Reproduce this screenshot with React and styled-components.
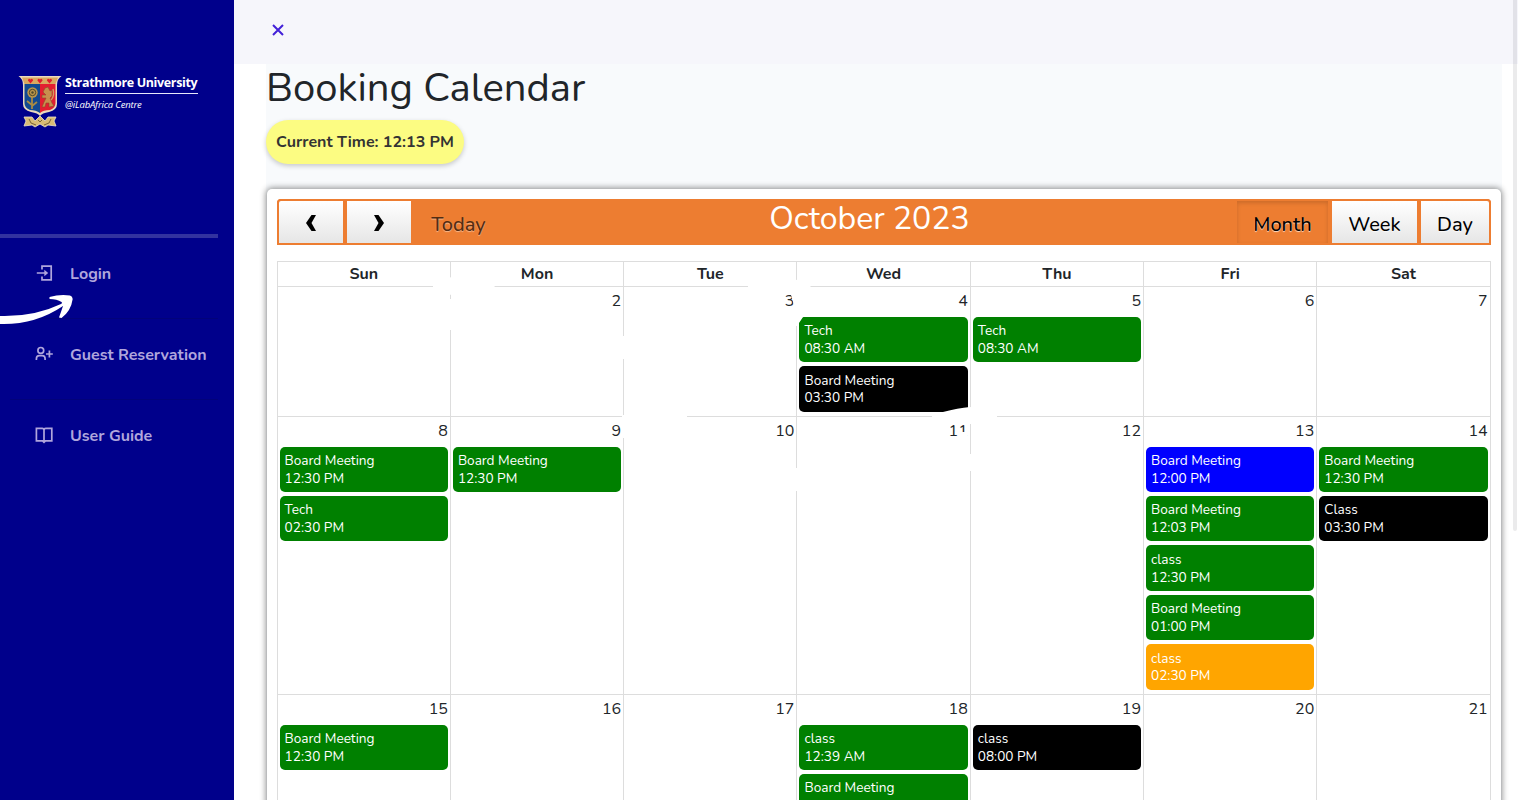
import React from "react";
import styled, { createGlobalStyle } from "styled-components";

const Global = createGlobalStyle`
  *, *::before, *::after { box-sizing: border-box; }
  html, body { margin: 0; height: 100%; overflow: hidden; background: #fff; }
  body { font-family: Nunito, Lato, "Open Sans", sans-serif; font-size: 16px; line-height: 1.6; color: #212529; }
`;

const Page = styled.div`
  position: relative;
  display: flex;
  width: 1518px;
  height: 800px;
  overflow: hidden;
`;

const Sidebar = styled.aside`
  flex: none;
  width: 234px;
  height: 800px;
  padding-right: 16px;
  background: #00008b;
`;

const Brand = styled.div`
  display: flex;
  gap: 3.5px;
  height: 234px;
  padding: 75px 0 0 17.5px;
  svg { flex: none; }
`;

const BrandText = styled.div`
  width: 133px;
  color: #fff;
  white-space: nowrap;
  font-family: "Open Sans", sans-serif;
`;

const BrandName = styled.div`
  height: 19px;
  border-bottom: 1px solid #e8e8fa;
  font-size: 12.5px;
  font-weight: 700;
  line-height: 15px;
  letter-spacing: -0.35px;
`;

const BrandSub = styled.div`
  padding-top: 2px;
  font-size: 9.5px;
  font-style: italic;
  line-height: 17px;
  letter-spacing: -0.18px;
`;

const Rule = styled.div`
  height: 4px;
  background: #32329f;
`;

const NavItem = styled.a`
  display: flex;
  align-items: center;
  gap: 17px;
  height: 81px;
  margin-left: 10px;
  padding: 0 0 8px 25px;
  border-bottom: 1px solid ${(p) => (p.$last ? "transparent" : "#02027a")};
  color: #b0a6dc;
  font-weight: 700;
  white-space: nowrap;
  svg { flex: none; margin-top: -2px; }
`;

const NavLabel = styled.span`
  padding-top: 1px;
`;

const Main = styled.main`
  flex: 1;
  min-width: 0;
`;

const TopBar = styled.header`
  display: flex;
  align-items: center;
  height: 64px;
  padding: 0 0 5px 38px;
  background: #f6f6fb;
`;

const Content = styled.section`
  height: 736px;
  margin: 0 16px 0 32px;
  background: #f8fafc;
`;

const Title = styled.h1`
  margin: 0 0 8px;
  font-size: 40px;
  font-weight: 400;
  line-height: 48px;
`;

const Clock = styled.div`
  display: flex;
  align-items: center;
  justify-content: center;
  width: 198px;
  height: 44px;
  margin-bottom: 25px;
  padding-top: 1px;
  border-radius: 22px;
  background: #fcfc82;
  box-shadow: 0 2px 5px rgba(0, 0, 0, 0.2);
  color: #333;
  font-weight: 700;
  white-space: nowrap;
`;

const Card = styled.div`
  height: 700px;
  margin: 0 1px;
  padding: 10px;
  border-radius: 5px;
  background: #fff;
  box-shadow: 0 0 6px 1px rgba(0, 0, 0, 0.45);
`;

const Toolbar = styled.div`
  display: flex;
  justify-content: space-between;
  height: 46px;
  margin-bottom: 16px;
  border-radius: 4px;
  background: #ed7d31;
`;

const Group = styled.div`
  display: flex;
`;

const ToolButton = styled.button`
  display: flex;
  align-items: center;
  justify-content: center;
  width: ${(p) => p.$w}px;
  height: 46px;
  padding: 5px 0 0;
  border: 2px solid #ed7d31;
  border-radius: ${(p) => p.$radius || "0"};
  background: ${(p) => (p.$flat ? "#ed7d31" : "linear-gradient(#fff, #e6e6e6)")};
  box-shadow: ${(p) => (p.$pressed ? "inset 0 2px 4px rgba(0,0,0,.15)" : "none")};
  color: ${(p) => (p.$dim ? "#532c11" : "#000")};
  font: inherit;
  font-size: 20px;
  font-weight: 500;
  text-shadow: 0 1px 1px rgba(255, 255, 255, ${(p) => (p.$dim ? 0.45 : 0.75)});
  svg { margin-top: -3px; }
`;

const Month = styled.h2`
  margin: 0;
  color: #fff;
  font-size: 32px;
  font-weight: 400;
  line-height: 40px;
`;

const Calendar = styled.div`
  margin: 0 0.4px 0 -0.4px;
  border: 1px solid #ddd;
  border-width: 1px 0 0 1px;
`;

const Week = styled.div`
  display: grid;
  grid-template-columns: repeat(7, 1fr);
  height: ${(p) => p.$h}px;
`;

const Weekday = styled.div`
  border: 1px solid #ddd;
  border-width: 0 1px 1px 0;
  font-weight: 700;
  line-height: 24.2px;
  text-align: center;
`;

const Day = styled.div`
  display: flex;
  flex-direction: column;
  gap: 4px;
  padding: 2px 2px 0;
  border: 1px solid #ddd;
  border-width: 0 1px 1px 0;
`;

const DayNumber = styled.div`
  height: 24px;
  line-height: 24px;
  text-align: right;
`;

const Event = styled.div`
  height: 45.36px;
  flex: none;
  padding: 5.38px 5px 0;
  border-radius: 5px;
  background: ${(p) => p.$color};
  color: #fff;
  font-size: 13.6px;
  line-height: 17.68px;
`;

const Overlay = styled.svg`
  position: absolute;
  inset: 0;
  pointer-events: none;
`;

const ScrollThumb = styled.div`
  position: absolute;
  top: 0;
  right: 1px;
  width: 4px;
  height: 531px;
  border-radius: 0 0 2px 2px;
  background: rgba(33, 37, 41, 0.09);
`;

function Crest() {
  return (
    <svg width="44" height="54" viewBox="0 0 44 54">
      <path d="M0.5 1H43.5Q39 4 39 10V29Q39 35 31 37Q24 38 22 41Q20 38 13 37Q5 35 5 29V10Q5 4 0.5 1Z" fill="#ead9bd" />
      <path d="M4 2.5H40L37.5 9H6.5Z" fill="#d9a860" />
      <path d="M6.5 9H22V38Q18 35 12 35Q6.5 33 6.5 28Z" fill="#124a91" />
      <path d="M22 9H37.5V28Q37.5 33 32 35Q25 35 22 38Z" fill="#e31e30" />
      {[12.5, 22, 31.5].map((x) => (
        <path key={x} d={`M${x} 8.6L${x - 2.6} 5.6Q${x - 2} 2.6 ${x} 4.6Q${x + 2} 2.6 ${x + 2.6} 5.6Z`} fill="#df1d2c" />
      ))}
      <path d="M14 22V34M14 30L9 26M14 31L19 27" stroke="#a78a44" strokeWidth="1.8" fill="none" />
      <circle cx="14.5" cy="17.5" r="5.2" fill="#bb964b" />
      <circle cx="14.5" cy="17.5" r="3.2" fill="none" stroke="#4d482b" strokeWidth="1" />
      <circle cx="14.5" cy="17.5" r="1.2" fill="#4d482b" />
      <path d="M27 13L30 12L32 16L34 15L34 21L32 23L34 28L36 31L31 32L31 28L28 28L27 32L24 32L26 27L28 23L24 23L24 20L28 20L25 17Z" fill="#c88f4d" stroke="#8c4a2a" strokeWidth="0.6" />
      <path d="M33 25Q37 21 35 14" stroke="#d1a061" strokeWidth="1.4" fill="none" />
      <path d="M6 42L14 42L17 46L22 41L27 46L30 42L38 42L36 46L38 51L30 50L27 52L22 49L17 52L14 50L6 51L8 46Z" fill="#d8bc75" stroke="#efe3c8" strokeWidth="0.8" />
      <path d="M11 44L13 48L18 50M33 44L31 48L26 50M20 45L22 47L24 45" stroke="#786338" strokeWidth="1" fill="none" />
    </svg>
  );
}

const line = { fill: "none", stroke: "currentColor", strokeWidth: 1.7 };

const LoginIcon = () => (
  <svg width="18" height="18" viewBox="0 0 18 18" {...line}>
    <path d="M7 5.5V2.2H16.2V15.8H7V12.5M1.8 9H11" />
    <path d="M9.3 5.8L13.2 9L9.3 12.2Z" fill="currentColor" stroke="none" />
  </svg>
);

const GuestIcon = () => (
  <svg width="18" height="18" viewBox="0 0 18 18" {...line}>
    <circle cx="5.8" cy="5.4" r="2.9" />
    <path d="M1.4 15V13.8Q1.4 10.7 4.3 10.7H7.2Q10.1 10.7 10.1 13.8V15M11 9H17.8M14.4 5.6V12.4" />
  </svg>
);

const GuideIcon = () => (
  <svg width="18" height="18" viewBox="0 0 18 18" {...line}>
    <path d="M1.4 2.3H7.2Q9 2.3 9 4Q9 2.3 10.8 2.3H16.8V14.8H10.4L9 16.2L7.6 14.8H1.4ZM9 4V16" />
  </svg>
);

const Chevron = ({ next }) => (
  <svg width="12" height="18" viewBox="0 0 12 18">
    <path d={next ? "M1 1H5.5L11 9L5.5 17H1L5.5 9Z" : "M11 1H6.5L1 9L6.5 17H11L6.5 9Z"} />
  </svg>
);

const G = "green";
const K = "black";
const weeks = [
  {
    height: 129.79,
    days: [
      [""], ["2"], ["3"],
      ["4", ["Tech", "08:30 AM", G], ["Board Meeting", "03:30 PM", K]],
      ["5", ["Tech", "08:30 AM", G]],
      ["6"], ["7"],
    ],
  },
  {
    height: 278,
    days: [
      ["8", ["Board Meeting", "12:30 PM", G], ["Tech", "02:30 PM", G]],
      ["9", ["Board Meeting", "12:30 PM", G]],
      ["10"], ["11"], ["12"],
      ["13", ["Board Meeting", "12:00 PM", "blue"], ["Board Meeting", "12:03 PM", G], ["class", "12:30 PM", G], ["Board Meeting", "01:00 PM", G], ["class", "02:30 PM", "orange"]],
      ["14", ["Board Meeting", "12:30 PM", G], ["Class", "03:30 PM", K]],
    ],
  },
  {
    height: 180,
    days: [
      ["15", ["Board Meeting", "12:30 PM", G]],
      ["16"], ["17"],
      ["18", ["class", "12:39 AM", G], ["Board Meeting", "", G]],
      ["19", ["class", "08:00 PM", K]],
      ["20"], ["21"],
    ],
  },
];

export default function App() {
  return (
    <Page>
      <Global />
      <Sidebar>
        <Brand>
          <Crest />
          <BrandText>
            <BrandName>Strathmore University</BrandName>
            <BrandSub>@iLabAfrica Centre</BrandSub>
          </BrandText>
        </Brand>
        <Rule />
        <NavItem><LoginIcon /><NavLabel>Login</NavLabel></NavItem>
        <NavItem><GuestIcon /><NavLabel>Guest Reservation</NavLabel></NavItem>
        <NavItem $last><GuideIcon /><NavLabel>User Guide</NavLabel></NavItem>
      </Sidebar>
      <Main>
        <TopBar>
          <svg width="12" height="12" viewBox="0 0 12 12">
            <path d="M1 1L11 11M11 1L1 11" stroke="#4321d8" strokeWidth="2" />
          </svg>
        </TopBar>
        <Content>
          <Title>Booking Calendar</Title>
          <Clock>Current Time: 12:13 PM</Clock>
          <Card>
            <Toolbar>
              <Group>
                <ToolButton $w={68} $radius="4px 0 0 0"><Chevron /></ToolButton>
                <ToolButton $w={68}><Chevron next /></ToolButton>
                <ToolButton $w={91} $flat $dim>Today</ToolButton>
              </Group>
              <Month>October 2023</Month>
              <Group>
                <ToolButton $w={95} $flat $pressed>Month</ToolButton>
                <ToolButton $w={89}>Week</ToolButton>
                <ToolButton $w={72} $radius="0 4px 0 0">Day</ToolButton>
              </Group>
            </Toolbar>
            <Calendar>
              <Week $h={24.95}>
                {["Sun", "Mon", "Tue", "Wed", "Thu", "Fri", "Sat"].map((d) => (
                  <Weekday key={d}>{d}</Weekday>
                ))}
              </Week>
              {weeks.map((w) => (
                <Week key={w.height} $h={w.height}>
                  {w.days.map(([n, ...events], i) => (
                    <Day key={i}>
                      <DayNumber>{n}</DayNumber>
                      {events.map(([name, time, color]) => (
                        <Event key={time} $color={color}>
                          <div>{name}</div>
                          <div>{time}</div>
                        </Event>
                      ))}
                    </Day>
                  ))}
                </Week>
              ))}
            </Calendar>
          </Card>
        </Content>
      </Main>
      <Overlay width="1518" height="800" fill="#fff">
        <path d="M0 316Q34 317 61 304Q63 303 61.5 302Q57 299 49.5 299V297Q60 294 70 295.5Q72.5 296 72.7 299Q71 311 61.5 318L59 317.5Q61 312 63 306Q35 325 0 324Z" />
        <path d="M433 284L448 277L496 284L470 330L433 330V299H452V295L433 292Z" />
        <path d="M748 285L790 278L811 284L805 314L799 323V326H794L789 309L794 305L791 295L748 289Z" />
        <path d="M616 336H630V359H616ZM622 415L687 414V438H622V416Z" />
        <path d="M790 468H802V491H790Z" />
        <path d="M932 415L943 412Q958 408 970 407L997 413V424H932ZM958 432H967V440H958ZM964 454H976V471H964Z" />
      </Overlay>
      <ScrollThumb />
    </Page>
  );
}
